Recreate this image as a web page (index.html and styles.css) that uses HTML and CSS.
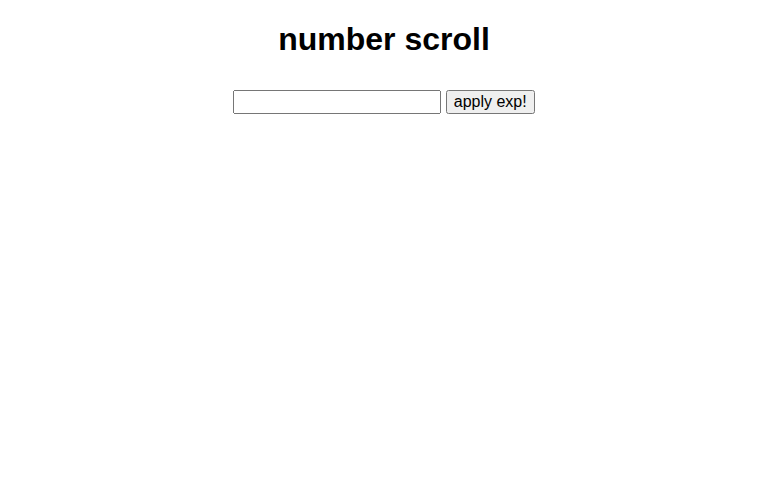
FILE: index.html
```html
<!DOCTYPE html>
<html lang="en">
<head>
  <meta charset="UTF-8" />
  <meta name="viewport" content="width=device-width, initial-scale=1.0" />
  <title>number scroll</title>
  <link rel="stylesheet" href="styles.css">
</head>
<body>
  <h1 class="title">number scroll</h1>

  <div class="controls">
    <input type="text" id="exp">
    <button id="apply">apply exp!</button>
  </div>

  <div class="numbers" id="numbers"></div>
</body>
</html>
```

FILE: styles.css
```css
body {
  font-family: 'Liberation Sans', Arial, sans-serif;
  text-align: center;
  color: #000;
  background: #fff;
}

.title {
  font-size: 32px;
  font-weight: bold;
  margin: 12.5px 0 32px;
}

.controls {
  margin: 0;
}

#exp {
  width: 200px;
  font-size: 16px;
  font-family: 'Liberation Sans', Arial, sans-serif;
}

#apply {
  font-size: 16px;
  font-family: 'Liberation Sans', Arial, sans-serif;
}
```
